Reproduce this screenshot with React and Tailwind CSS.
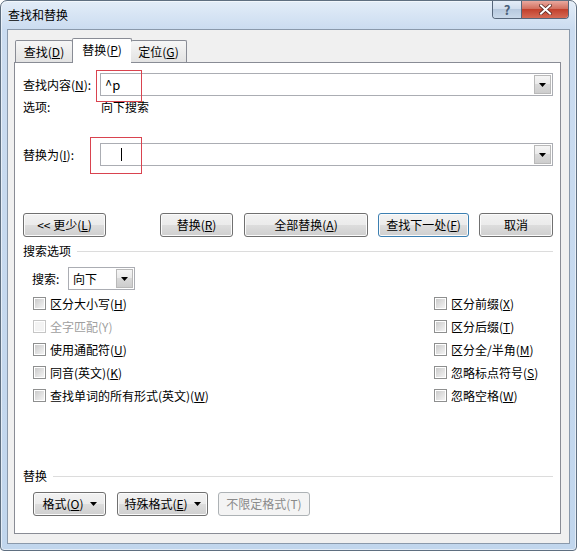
import React from 'react'

const btn =
  'h-[24px] flex items-center justify-center rounded-[3px] border border-[#707070] bg-[linear-gradient(to_bottom,#f2f2f2_0%,#ebebeb_50%,#dddddd_50%,#cfcfcf_100%)] shadow-[inset_0_0_0_1px_#fbfbfb] text-black'

function Tri() {
  return (
    <svg width="7" height="4" viewBox="0 0 7 4" className="shrink-0">
      <path d="M0 0h7L3.5 4z" fill="#000" />
    </svg>
  )
}

function DropBtn() {
  return (
    <div className="w-[17px] self-stretch flex items-center justify-center border border-[#b9b9b9] bg-[linear-gradient(to_bottom,#f5f5f5_0%,#e9e9e9_50%,#d9d9d9_50%,#cdcdcd_100%)]">
      <Tri />
    </div>
  )
}

function Check({ label, disabled }) {
  return (
    <div className="h-[23px] flex items-center">
      <div
        className={`w-[13px] h-[13px] border p-px ${disabled ? 'border-[#c6c6c6] bg-white' : 'border-[#8e8f8f] bg-white'}`}
      >
        <div
          className={`w-full h-full ${
            disabled ? 'bg-[#f3f3f3]' : 'bg-[linear-gradient(135deg,#cbcbcb,#f3f3f3)]'
          }`}
        />
      </div>
      <span className={`ml-[4px] ${disabled ? 'text-[#a0a0a0]' : 'text-black'}`}>{label}</span>
    </div>
  )
}

function Group({ title, gap }) {
  return (
    <div className="flex items-center h-[16px]">
      <span>{title}</span>
      <div className={`flex-1 h-px bg-[#dcdcdc] ${gap}`} />
    </div>
  )
}

export default function App() {
  return (
    <div className="w-[577px] h-[551px] relative flex flex-col rounded-t-[7px] rounded-b-[4px] border border-[#5f6f80] bg-[linear-gradient(to_bottom,#e3edf8_0px,#cbdcf0_28px,#c1d6ed_100%)] shadow-[inset_0_0_0_1px_rgba(255,255,255,0.55)] font-['Noto_Sans_CJK_SC',sans-serif] text-[12px] leading-[16px] text-black overflow-hidden">
      {/* title bar */}
      <div className="h-[28px] shrink-0 flex items-center pl-[7px] text-[12px] text-black">查找和替换</div>
      <div className="absolute top-0 right-[7px] flex h-[18px] rounded-b-[4px] border border-t-0 border-[#56667a] overflow-hidden">
        <div className="w-[29px] flex items-center justify-center border-r border-[#56667a] bg-[linear-gradient(to_bottom,#e4edf7_0%,#cfdcec_50%,#b7c9de_50%,#c9d9ea_100%)] text-[13px] font-bold text-[#4a5f78] leading-none">
          ?
        </div>
        <div className="w-[46px] flex items-center justify-center bg-[linear-gradient(to_bottom,#e9a99f_0%,#d2705f_45%,#c2412d_50%,#d56a55_100%)]">
          <svg width="13" height="11" viewBox="0 0 13 11">
            <path d="M2 1.5l9 8M11 1.5l-9 8" stroke="#5a2a24" strokeWidth="3.6" strokeLinecap="square" />
            <path d="M2 1.5l9 8M11 1.5l-9 8" stroke="#fff" strokeWidth="2" strokeLinecap="square" />
          </svg>
        </div>
      </div>

      {/* client area */}
      <div className="flex-1 mx-[6px] mb-[6px] border border-[#8a99ab] bg-[#f0f0f0] flex flex-col">
        {/* tabs */}
        <div className="flex items-end pt-[8px] pl-[7px] relative z-10 -mb-px">
          <div className="w-[58px] h-[22px] mb-px flex items-center justify-center border border-[#898c95] border-b-0 rounded-t-[2px] bg-[linear-gradient(to_bottom,#f6f6f6,#e3e3e3)]">
            查找(<u>D</u>)
          </div>
          <div className="w-[60px] -ml-px h-[25px] flex items-center justify-center border border-[#898c95] border-b-0 rounded-t-[2px] bg-white pb-[2px]">
            替换(<u>P</u>)
          </div>
          <div className="w-[56px] -ml-px h-[22px] mb-px flex items-center justify-center border border-[#898c95] border-b-0 border-l-0 rounded-t-[2px] bg-[linear-gradient(to_bottom,#f6f6f6,#e3e3e3)]">
            定位(<u>G</u>)
          </div>
        </div>

        {/* tab panel */}
        <div className="flex-1 ml-[6px] mr-[8px] mb-[9px] border border-[#898c95] bg-white pl-[8px] pr-[7px] flex flex-col">
          <div className="mt-[10px] flex items-center h-[23px]">
            <div className="w-[77px]">
              查找内容(<u>N</u>):
            </div>
            <div className="flex-1 h-[23px] flex border border-[#abadb3] bg-white p-px">
              <div className="flex-1 pl-[3px] flex items-center text-[13px]">^p</div>
              <DropBtn />
            </div>
          </div>

          <div className="mt-[3px] flex">
            <div className="w-[78px]">选项:</div>
            <div>向下搜索</div>
          </div>

          <div className="mt-[28px] flex items-center h-[23px]">
            <div className="w-[77px]">
              替换为(<u>I</u>):
            </div>
            <div className="flex-1 h-[23px] flex border border-[#abadb3] bg-white p-px">
              <div className="flex-1 pl-[19px] flex items-center">
                <div className="w-px h-[13px] bg-black" />
              </div>
              <DropBtn />
            </div>
          </div>

          <div className="mt-[47px] flex">
            <div className={`${btn} w-[83px]`}>
              {'<< 更少('}
              <u>L</u>)
            </div>
            <div className={`${btn} w-[73px] ml-[54px]`}>
              替换(<u>R</u>)
            </div>
            <div className={`${btn} w-[124px] ml-[11px]`}>
              全部替换(<u>A</u>)
            </div>
            <div className={`${btn} w-[91px] ml-[10px] !border-[#3c7fb1] shadow-[inset_0_0_0_1px_#aee1fa]`}>
              查找下一处(<u>F</u>)
            </div>
            <div className={`${btn} w-[74px] ml-[10px]`}>取消</div>
          </div>

          <div className="mt-[6px]">
            <Group title="搜索选项" gap="ml-[6px]" />
          </div>

          <div className="mt-[8px] flex items-center pl-[9px] h-[23px]">
            <div className="w-[36px]">搜索:</div>
            <div className="w-[67px] h-[23px] flex border border-[#abadb3] bg-white p-px">
              <div className="flex-1 pl-[3px] flex items-center">向下</div>
              <DropBtn />
            </div>
          </div>

          <div className="mt-[2px] flex">
            <div className="w-[411px] pl-[10px]">
              <Check label={<>区分大小写(<u>H</u>)</>} />
              <Check label="全字匹配(Y)" disabled />
              <Check label={<>使用通配符(<u>U</u>)</>} />
              <Check label={<>同音(英文)(<u>K</u>)</>} />
              <Check label={<>查找单词的所有形式(英文)(<u>W</u>)</>} />
            </div>
            <div className="flex-1">
              <Check label={<>区分前缀(<u>X</u>)</>} />
              <Check label={<>区分后缀(<u>T</u>)</>} />
              <Check label={<>区分全/半角(<u>M</u>)</>} />
              <Check label={<>忽略标点符号(<u>S</u>)</>} />
              <Check label={<>忽略空格(<u>W</u>)</>} />
            </div>
          </div>

          <div className="mt-[61px]">
            <Group title="替换" gap="ml-[6px]" />
          </div>

          <div className="mt-[8px] flex pl-[10px]">
            <div className={`${btn} w-[73px] gap-[6px]`}>
              <span>
                格式(<u>O</u>)
              </span>
              <Tri />
            </div>
            <div className={`${btn} w-[91px] ml-[11px] gap-[6px]`}>
              <span>
                特殊格式(<u>E</u>)
              </span>
              <Tri />
            </div>
            <div className="h-[24px] w-[92px] ml-[10px] flex items-center justify-center rounded-[3px] border border-[#adb2b5] bg-[#f4f4f4] text-[#8a8a8a]">
              不限定格式(T)
            </div>
          </div>
        </div>
      </div>

      {/* red annotation boxes */}
      <div className="absolute left-[95px] top-[69px] w-[46px] h-[32px] border-[1.5px] border-[#d9434f]" />
      <div className="absolute left-[89px] top-[136px] w-[52px] h-[37px] border-[1.5px] border-[#d9434f]" />
    </div>
  )
}
